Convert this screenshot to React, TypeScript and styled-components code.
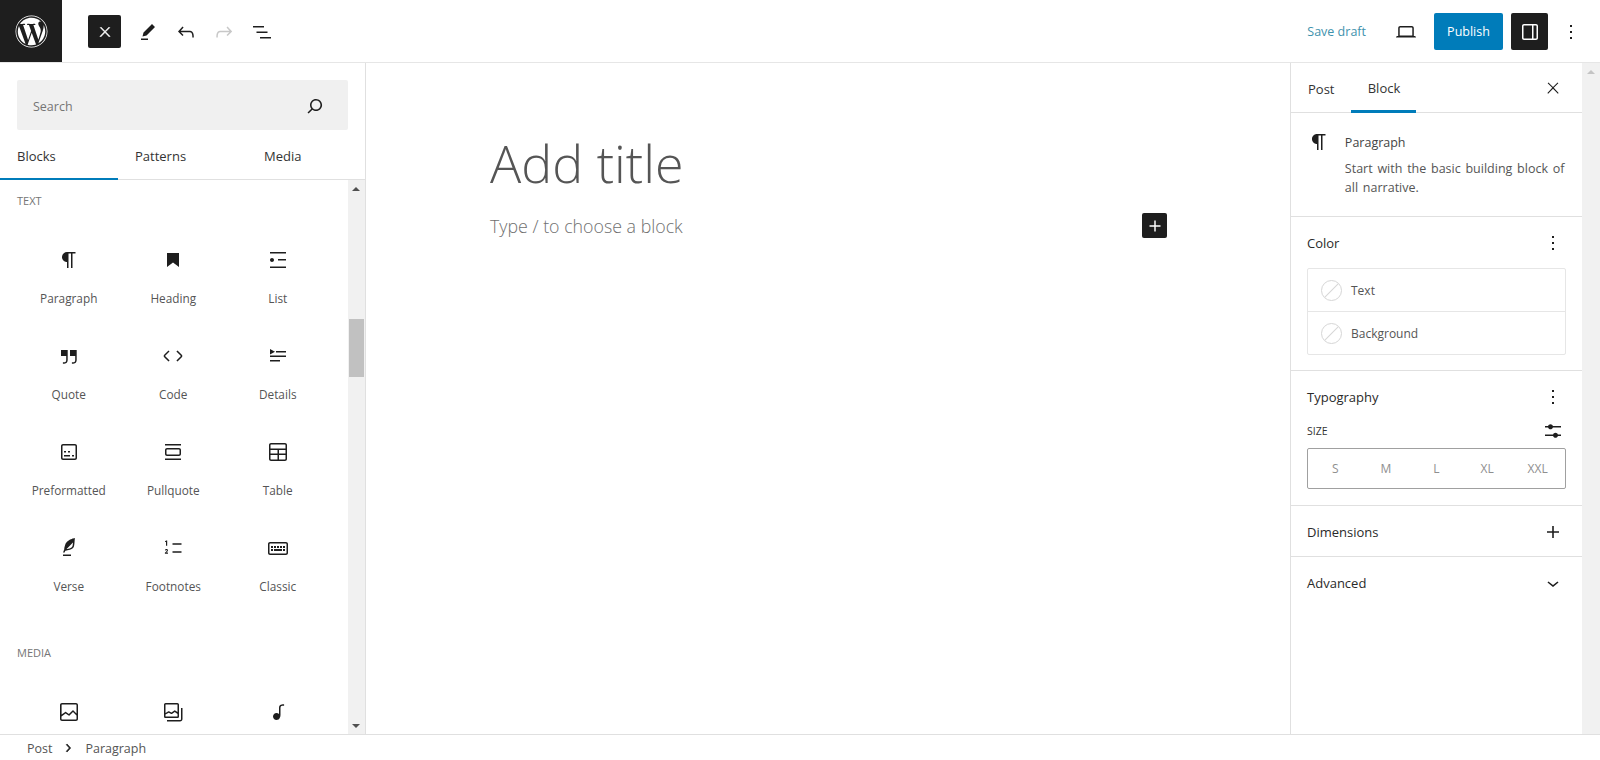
import React from "react";
import styled, { createGlobalStyle } from "styled-components";
import { FaWordpress } from "react-icons/fa";

// ------ Icon paths ------

const paths: Record<string, string> = {
  close: "M13 11.8l6.1-6.3-1-1-6.1 6.2-6.1-6.2-1 1 6.1 6.3-6.5 6.7 1 1 6.5-6.6 6.5 6.6 1-1z",
  plus: "M18 11.2h-5.2V6h-1.6v5.2H6v1.6h5.2V18h1.6v-5.2H18z",
  pencil: "m19 7-3-3-8.5 8.5-1 4 4-1L19 7Zm-7 11.5H5V20h7v-1.5Z",
  undo: "M18.3 11.7c-.6-.6-1.4-.9-2.3-.9H6.7l2.9-3.3-1.1-1-4.5 5L8.5 16l1-1-2.7-2.7H16c.5 0 .9.2 1.3.5 1 1 1 3.4 1 4.5v.3h1.5v-.2c0-1.5 0-4.3-1.5-5.7z",
  redo: "M15.6 6.5l-1.1 1 2.9 3.3H8c-.9 0-1.7.3-2.3.9-1.4 1.5-1.4 4.2-1.4 5.6v.2h1.5v-.3c0-1.1 0-3.5 1-4.5.3-.3.7-.5 1.3-.5h9.2L14.5 15l1.1 1.1 4.6-4.6-4.6-5z",
  listView: "M3 6h11v1.5H3V6Zm3.5 5.5h11V13h-11v-1.5ZM21 17H10v1.5h11V17Z",
  search: "M13 5c-3.3 0-6 2.7-6 6 0 1.4.5 2.7 1.3 3.7l-3.8 3.8 1.1 1.1 3.8-3.8c1 .8 2.3 1.3 3.7 1.3 3.3 0 6-2.7 6-6S16.3 5 13 5zm0 10.5c-2.5 0-4.5-2-4.5-4.5s2-4.5 4.5-4.5 4.5 2 4.5 4.5-2 4.5-4.5 4.5z",
  paragraph: "m9.99609 14v-.2251l.00391.0001v6.225h1.5v-14.5h2.5v14.5h1.5v-14.5h3v-1.5h-8.50391c-2.76142 0-5 2.23858-5 5 0 2.7614 2.23858 5 5 5z",
  heading: "M6 5h12v14l-6-4.4L6 19z",
  list: "M4 4v1.5h16V4H4zm8 8.5h8V11h-8v1.5zM4 20h16v-1.5H4V20zm4-8c0-1.1-.9-2-2-2s-2 .9-2 2 .9 2 2 2 2-.9 2-2z",
  quote: "M13 6v6h5.2v4c0 .8-.2 1.4-.5 1.7-.6.6-1.6.6-2.5.5h-.3v1.5h.5c1 0 2.3-.1 3.3-1 .6-.6 1-1.6 1-2.8V6H13zm-9 6h5.2v4c0 .8-.2 1.4-.5 1.7-.6.6-1.6.6-2.5.5h-.3v1.5h.5c1 0 2.3-.1 3.3-1 .6-.6 1-1.6 1-2.8V6H4v6z",
  code: "M20.8 10.7l-4.3-4.3-1.1 1.1 4.3 4.3c.1.1.1.3 0 .4l-4.3 4.3 1.1 1.1 4.3-4.3c.7-.8.7-1.9 0-2.6zM4.2 11.8l4.3-4.3-1-1-4.3 4.3c-.7.7-.7 1.8 0 2.5l4.3 4.3 1.1-1.1-4.3-4.3c-.2-.1-.2-.3-.1-.4z",
  details: "M4 16h10v1.5H4V16Zm0-4.5h16V13H4v-1.5ZM10 7h10v1.5H10V7ZM4 5l5 2.75L4 10.5Z",
  preformatted: "M18 4H6c-1.1 0-2 .9-2 2v12c0 1.1.9 2 2 2h12c1.1 0 2-.9 2-2V6c0-1.1-.9-2-2-2zm.5 14c0 .3-.2.5-.5.5H6c-.3 0-.5-.2-.5-.5V6c0-.3.2-.5.5-.5h12c.3 0 .5.2.5.5v12zM7 16.5h6V15H7v1.5zm4-4h2V11h-2v1.5zM9 11H7v1.5h2V11zm6 5.5h2V15h-2v1.5z",
  pullquote: "M18 8H6c-1.1 0-2 .9-2 2v4c0 1.1.9 2 2 2h12c1.1 0 2-.9 2-2v-4c0-1.1-.9-2-2-2zm.5 6c0 .3-.2.5-.5.5H6c-.3 0-.5-.2-.5-.5v-4c0-.3.2-.5.5-.5h12c.3 0 .5.2.5.5v4zM4 4v1.5h16V4H4zm0 16h16v-1.5H4V20z",
  table: "M19 3H5c-1.1 0-2 .9-2 2v14c0 1.1.9 2 2 2h14c1.1 0 2-.9 2-2V5c0-1.1-.9-2-2-2zM5 4.5h14c.3 0 .5.2.5.5v3.5h-15V5c0-.3.2-.5.5-.5zm8 5.5h6.5v3.5H13V10zm-1.5 3.5h-7V10h7v3.5zm-7 5.5v-4h7v4.5H5c-.3 0-.5-.2-.5-.5zm14.5.5h-6V15h6.5v4c0 .3-.2.5-.5.5z",
  verse: "M17.8 2l-.9.3c-.1 0-3.6 1-5.2 2.1C10 5.5 9.3 6.5 8.9 7.1c-.6.9-1.7 4.7-1.7 6.3l-.9 2.3c-.2.4 0 .8.4 1 .1 0 .2.1.3.1.3 0 .6-.2.7-.5l.6-1.5c.3 0 .7-.1 1.2-.2.7-.1 1.4-.3 2.2-.5.8-.2 1.6-.5 2.4-.8.7-.3 1.4-.7 1.9-1.2s.8-1.2 1-1.9c.2-.7.3-1.6.4-2.4.1-.8.1-1.7.2-2.5 0-.8.1-1.5.2-2.1V2zm-1.9 5.6c-.1.8-.2 1.5-.3 2.1-.2.6-.4 1-.6 1.3-.3.3-.8.6-1.4.9-.7.3-1.4.5-2.2.8-.6.2-1.3.3-1.8.4L15 7.5c.3-.3.6-.7 1-1.1 0 .4 0 .8-.1 1.2zM6 20h8v-1.5H6V20z",
  footnotes: "M11.5 7.3h9v1.5h-9zM11.5 15.3h9v1.5h-9zM5 4.5h1.2v5.2H5V6H4V5.2c.5 0 .9-.3 1-.7zM3.9 14.2c.2-.9.9-1.3 1.6-1.3.9 0 1.5.6 1.5 1.4 0 .7-.4 1.2-1.1 1.7l-.7.6H7v1.1H3.9v-1c.3-.4.7-.8 1.3-1.3.5-.4.7-.7.7-1 0-.3-.2-.5-.4-.5-.3 0-.5.2-.6.6z",
  classic: "M20 6H4c-1.1 0-2 .9-2 2v9c0 1.1.9 2 2 2h16c1.1 0 2-.9 2-2V8c0-1.1-.9-2-2-2zm.5 11c0 .3-.2.5-.5.5H4c-.3 0-.5-.2-.5-.5V8c0-.3.2-.5.5-.5h16c.3 0 .5.2.5.5v9zM10 10H8v2h2v-2zm-5 2h2v-2H5v2zm8-2h-2v2h2v-2zm-5 5h8v-2H8v2zm6-3h2v-2h-2v2zm3 0h2v-2h-2v2zm0 3h2v-2h-2v2zM5 15h2v-2H5v2z",
  image: "M19 3H5c-1.1 0-2 .9-2 2v14c0 1.1.9 2 2 2h14c1.1 0 2-.9 2-2V5c0-1.1-.9-2-2-2zM5 4.5h14c.3 0 .5.2.5.5v8.4l-3-2.9c-.3-.3-.8-.3-1 0L11.9 14 9 12c-.3-.2-.6-.2-.8 0l-3.6 2.6V5c-.1-.3.1-.5.4-.5zm14 15H5c-.3 0-.5-.2-.5-.5v-2.4l4.1-3 3 1.9c.3.2.7.2.9-.1L16 12l3.5 3.4V19c0 .3-.2.5-.5.5z",
  gallery: "M16.375 4.5H4.625a.125.125 0 0 0-.125.125v8.254l2.859-1.54a.75.75 0 0 1 .68-.016l2.384 1.142 2.89-2.074a.75.75 0 0 1 .874 0l2.313 1.66V4.625a.125.125 0 0 0-.125-.125Zm.125 9.398-2.75-1.975-2.813 2.02a.75.75 0 0 1-.76.067l-2.444-1.17L4.5 14.583v1.792c0 .069.056.125.125.125h11.75a.125.125 0 0 0 .125-.125v-2.477ZM4.625 3C3.728 3 3 3.728 3 4.625v11.75C3 17.273 3.728 18 4.625 18h11.75c.898 0 1.625-.727 1.625-1.625V4.625C18 3.728 17.273 3 16.375 3H4.625ZM20 8v11c0 .69-.31 1-.999 1H6v1.5h13.001c1.52 0 2.499-.982 2.499-2.5V8H20Z",
  audio: "M17.7 4.3c-1.2 0-2.8 0-3.8 1-.6.6-.9 1.5-.9 2.6V14c-.6-.6-1.5-1-2.5-1C8.6 13 7 14.6 7 16.5S8.6 20 10.5 20c1.5 0 2.8-1 3.3-2.3.5-.8.7-1.8.7-2.7V7.9c0-.7.2-1.2.5-1.6.6-.6 1.8-.6 2.8-.6h.3V4.3h-.4z",
  sidebar: "M18 4H6c-1.1 0-2 .9-2 2v12c0 1.1.9 2 2 2h12c1.1 0 2-.9 2-2V6c0-1.1-.9-2-2-2zm-4 14.5H6c-.3 0-.5-.2-.5-.5V6c0-.3.2-.5.5-.5h8v13zm4.5-.5c0 .3-.2.5-.5.5h-2.5v-13H18c.3 0 .5.2.5.5v12z",
  laptop: "M20.5 16h-.7V8c0-1.1-.9-2-2-2H6.2c-1.1 0-2 .9-2 2v8h-.7c-.8 0-1.5.7-1.5 1.5h20c0-.8-.7-1.5-1.5-1.5zM5.7 8c0-.3.2-.5.5-.5h11.6c.3 0 .5.2.5.5v7.6H5.7V8z",
  more: "M13 19h-2v-2h2v2zm0-6h-2v-2h2v2zm0-6h-2V5h2v2z",
  sliders: "M14.5 13.8c-1.1 0-2.1.7-2.4 1.8H4V17h8.1c.3 1 1.3 1.8 2.4 1.8s2.1-.7 2.4-1.8H20v-1.5h-3.1c-.3-1-1.3-1.7-2.4-1.7zM11.9 7c-.3-1-1.3-1.8-2.4-1.8S7.4 6 7.1 7H4v1.5h3.1c.3 1 1.3 1.8 2.4 1.8s2.1-.7 2.4-1.8H20V7h-8.1z",
  chevronDown: "M17.5 11.6L12 16l-5.5-4.4.9-1.2L12 14l4.5-3.6 1 1.2z",
  chevronRight: "M10.6 6L9.4 7l4.6 5-4.6 5 1.2 1 5.4-6z",
};

// ------ Global Style ------

const GlobalStyle = createGlobalStyle`
  html, body {
    margin: 0;
    padding: 0;
    height: 100%;
    overflow: hidden;
    background: #fff;
    font-family: "Open Sans", "Noto Sans", sans-serif;
    color: #1e1e1e;
  }
  * {
    box-sizing: border-box;
  }
`;

// ------ Shell ------

const Shell = styled.div`
  display: flex;
  flex-direction: column;
  width: 1600px;
  height: 760px;
`;

const Workspace = styled.div`
  display: flex;
  flex: 1;
  min-height: 0;
`;

// ------ Top bar ------

const TopBar = styled.header`
  display: flex;
  align-items: center;
  flex: none;
  height: 63px;
  padding-top: 1px;
  border-bottom: 1px solid #e6e6e6;
`;

const Logo = styled.div`
  display: flex;
  align-items: center;
  justify-content: center;
  align-self: flex-start;
  width: 62px;
  height: 62px;
  margin-top: -1px;
  color: #fff;
  background: #1e1e1e;
`;

const ToolGroup = styled.div`
  display: flex;
  align-items: center;
  gap: 14px;
  margin-left: 15px;
`;

const DarkButton = styled.div<{ $w: number; $h: number; $ml: number }>`
  display: flex;
  align-items: center;
  justify-content: center;
  width: ${(p) => p.$w}px;
  height: ${(p) => p.$h}px;
  margin-left: ${(p) => p.$ml}px;
  color: #fff;
  background: #1e1e1e;
  border-radius: 2px;
`;

const Actions = styled.div`
  display: flex;
  align-items: center;
  margin-left: auto;
  padding-right: 17px;
`;

const SaveDraft = styled.span`
  margin-right: 28px;
  font-size: 12.5px;
  color: #3f92ad;
`;

const PublishButton = styled.div`
  display: flex;
  align-items: center;
  justify-content: center;
  width: 69px;
  height: 37px;
  margin-left: 16px;
  font-size: 12.5px;
  color: #fff;
  background: #007cba;
  border-radius: 2px;
`;

const IconBox = styled.svg<{ $size?: number; $color?: string; $bold?: number }>`
  display: block;
  flex: none;
  width: ${(p) => p.$size ?? 24}px;
  height: ${(p) => p.$size ?? 24}px;
  fill: ${(p) => p.$color ?? "#1e1e1e"};
  fill-rule: evenodd;
  ${(p) => p.$bold && `stroke: ${p.$color ?? "#1e1e1e"}; stroke-width: ${p.$bold}px;`}
`;

const Icon = ({ name, size, color, bold }: { name: string; size?: number; color?: string; bold?: number }) => (
  <IconBox viewBox="0 0 24 24" $size={size} $color={color} $bold={bold}>
    <path d={paths[name]} />
  </IconBox>
);

const MoreButton = styled.div`
  margin-left: 11px;
`;

// ------ Inserter ------

const Inserter = styled.aside`
  display: flex;
  flex: none;
  flex-direction: column;
  width: 366px;
  border-right: 1px solid #e0e0e0;
`;

const SearchArea = styled.div`
  flex: none;
  padding: 17px 17px 0;
`;

const SearchBox = styled.div`
  display: flex;
  align-items: center;
  justify-content: space-between;
  width: 331px;
  height: 50px;
  padding: 2px 21px 0 16px;
  font-size: 12.5px;
  color: #757575;
  background: #f0f0f0;
  border-radius: 2px;
`;

const Tabs = styled.div`
  display: grid;
  flex: none;
  grid-template-columns: 118px 129px 1fr;
  height: 50px;
  border-bottom: 1px solid #e0e0e0;
`;

const Tab = styled.div<{ $active?: boolean }>`
  display: flex;
  align-items: center;
  height: 50px;
  padding: 3px 0 0 17px;
  font-size: 13px;
  color: #333;
  border-bottom: 2px solid ${(p) => (p.$active ? "#007cba" : "transparent")};
`;

const InserterBody = styled.div`
  display: flex;
  flex: 1;
  min-height: 0;
`;

const BlockList = styled.div`
  flex: 1;
  min-width: 0;
  overflow: hidden;
`;

const SectionTitle = styled.div<{ $top: number }>`
  margin-top: ${(p) => p.$top}px;
  padding-left: 17px;
  font-size: 11px;
  line-height: 16px;
  color: #757575;
`;

const BlockGrid = styled.div`
  display: grid;
  grid-template-columns: repeat(3, 104.5px);
  grid-auto-rows: 96px;
  margin: 39px 0 0 16.5px;
`;

const BlockItem = styled.div`
  display: flex;
  flex-direction: column;
  align-items: center;
  gap: 18px;
  font-size: 11.8px;
  line-height: 16px;
  color: #555;
`;

const Scrollbar = styled.div<{ $width: number }>`
  position: relative;
  flex: none;
  width: ${(p) => p.$width}px;
  background: #f1f1f1;
`;

const Arrow = styled.div<{ $down?: boolean; $light?: boolean }>`
  position: absolute;
  left: ${(p) => (p.$light ? 5 : 4)}px;
  ${(p) => (p.$down ? "bottom: 6px;" : "top: 7px;")}
  width: 0;
  height: 0;
  border-left: 4px solid transparent;
  border-right: 4px solid transparent;
  ${(p) => (p.$down ? "border-top" : "border-bottom")}: 4px solid ${(p) => (p.$light ? "#c4c4c4" : "#505050")};
`;

const Thumb = styled.div`
  position: absolute;
  top: 139px;
  left: 1px;
  width: 15px;
  height: 58px;
  background: #c1c1c1;
`;

// ------ Editor canvas ------

const Canvas = styled.main`
  flex: 1;
  min-width: 0;
  padding: 66px 0 0 1px;
`;

const Column = styled.div`
  width: 677px;
  margin: 0 auto;
`;

const Title = styled.h1`
  margin: 0;
  font-size: 52px;
  font-weight: 300;
  line-height: 68px;
  color: #555;
`;

const ParagraphRow = styled.div`
  display: flex;
  align-items: center;
  justify-content: space-between;
  margin-top: 16px;
`;

const Placeholder = styled.span`
  font-size: 17.8px;
  font-weight: 300;
  color: #6f6f6f;
`;

const PlusButton = styled.div`
  display: flex;
  align-items: center;
  justify-content: center;
  width: 25px;
  height: 25px;
  background: #1e1e1e;
  border-radius: 2px;
`;

// ------ Settings sidebar ------

const Settings = styled.aside`
  display: flex;
  flex: none;
  flex-direction: column;
  width: 292px;
  border-left: 1px solid #e0e0e0;
`;

const SettingsTabs = styled.div`
  display: flex;
  align-items: center;
  flex: none;
  height: 50px;
  padding-left: 17px;
  border-bottom: 1px solid #e0e0e0;
`;

const SettingsTab = styled.div<{ $active?: boolean; $ml?: number }>`
  display: flex;
  align-items: center;
  justify-content: center;
  height: 50px;
  margin-left: ${(p) => p.$ml ?? 0}px;
  padding-top: 3px;
  font-size: 13px;
  color: #333;
  ${(p) => p.$active && "width: 65px; border-bottom: 3px solid #007cba;"}
`;

const TabClose = styled.div`
  margin-left: auto;
  margin-right: 20px;
`;

const BlockCard = styled.div`
  display: flex;
  flex: none;
  height: 104px;
  padding: 17px 16px 0 16px;
  border-bottom: 1px solid #e0e0e0;
`;

const CardIcon = styled.div`
  width: 38px;
`;

const CardText = styled.div`
  width: 222px;
  padding-top: 5px;
`;

const CardTitle = styled.div`
  font-size: 12.5px;
  font-weight: 500;
  line-height: 16px;
  color: #444;
`;

const CardDescription = styled.div`
  margin-top: 8px;
  font-size: 12.5px;
  line-height: 19px;
  word-spacing: 1.5px;
  color: #555;
`;

const Panel = styled.section<{ $height: number; $flat?: boolean }>`
  flex: none;
  height: ${(p) => p.$height}px;
  padding: 0 16px;
  ${(p) => !p.$flat && "border-bottom: 1px solid #e0e0e0;"}
`;

const PanelHeader = styled.div<{ $height: number }>`
  display: flex;
  align-items: center;
  justify-content: space-between;
  height: ${(p) => p.$height}px;
  padding-right: 1px;
  font-size: 13px;
  font-weight: 500;
  color: #2a2a2a;
`;

const ColorBox = styled.div`
  width: 259px;
  height: 87px;
  margin-top: -1px;
  border: 1px solid #e6e6e6;
  border-radius: 2px;
`;

const ColorRow = styled.div`
  display: flex;
  align-items: center;
  gap: 9px;
  height: 42px;
  padding-left: 13px;
  font-size: 12px;
  color: #555;
  & + & {
    height: 43px;
    border-top: 1px solid #e6e6e6;
  }
`;

const Swatch = styled.span`
  position: relative;
  overflow: hidden;
  width: 21px;
  height: 21px;
  border: 1px solid #d6d6d6;
  border-radius: 50%;
  &::after {
    content: "";
    position: absolute;
    top: 9px;
    left: -3px;
    width: 25px;
    height: 1px;
    background: #d6d6d6;
    transform: rotate(-45deg);
  }
`;

const SizeLabelRow = styled.div`
  display: flex;
  align-items: center;
  justify-content: space-between;
  height: 24px;
  margin-top: -4px;
  padding-right: 1px;
  font-size: 10.5px;
  color: #333;
`;

const SizeControl = styled.div`
  display: grid;
  grid-template-columns: repeat(5, 1fr);
  align-items: center;
  width: 259px;
  height: 41px;
  margin-top: 5px;
  padding: 0 2px;
  font-size: 12px;
  text-align: center;
  color: #8f8f8f;
  border: 1px solid #a0a0a0;
  border-radius: 2px;
`;

// ------ Footer ------

const Footer = styled.footer`
  display: flex;
  align-items: center;
  flex: none;
  height: 26px;
  padding: 1px 0 0 27px;
  font-size: 12.5px;
  color: #555;
  border-top: 1px solid #e0e0e0;
`;

const Crumb = styled.div`
  margin: 0 9px 0 8px;
`;

// ------ Data ------

const textBlocks = [
  ["paragraph", "Paragraph"],
  ["heading", "Heading"],
  ["list", "List"],
  ["quote", "Quote"],
  ["code", "Code"],
  ["details", "Details"],
  ["preformatted", "Preformatted"],
  ["pullquote", "Pullquote"],
  ["table", "Table"],
  ["verse", "Verse"],
  ["footnotes", "Footnotes"],
  ["classic", "Classic"],
];

const mediaBlocks = ["image", "gallery", "audio"];

// ------ App ------

export default function App() {
  return (
    <Shell>
      <GlobalStyle />
      <TopBar>
        <Logo>
          <FaWordpress size={33} />
        </Logo>
        <DarkButton $w={33} $h={33} $ml={26}>
          <Icon name="close" size={16} color="#fff" bold={0.8} />
        </DarkButton>
        <ToolGroup>
          <Icon name="pencil" />
          <Icon name="undo" />
          <Icon name="redo" color="#c8c8c8" />
          <Icon name="listView" />
        </ToolGroup>
        <Actions>
          <SaveDraft>Save draft</SaveDraft>
          <Icon name="laptop" />
          <PublishButton>Publish</PublishButton>
          <DarkButton $w={37} $h={37} $ml={8}>
            <Icon name="sidebar" color="#fff" />
          </DarkButton>
          <MoreButton>
            <Icon name="more" />
          </MoreButton>
        </Actions>
      </TopBar>

      <Workspace>
        <Inserter>
          <SearchArea>
            <SearchBox>
              Search
              <Icon name="search" />
            </SearchBox>
          </SearchArea>
          <Tabs>
            <Tab $active>Blocks</Tab>
            <Tab>Patterns</Tab>
            <Tab>Media</Tab>
          </Tabs>
          <InserterBody>
            <BlockList>
              <SectionTitle $top={13}>TEXT</SectionTitle>
              <BlockGrid>
                {textBlocks.map(([icon, label]) => (
                  <BlockItem key={label}>
                    <Icon name={icon} />
                    {label}
                  </BlockItem>
                ))}
              </BlockGrid>
              <SectionTitle $top={13}>MEDIA</SectionTitle>
              <BlockGrid>
                {mediaBlocks.map((icon) => (
                  <BlockItem key={icon}>
                    <Icon name={icon} />
                  </BlockItem>
                ))}
              </BlockGrid>
            </BlockList>
            <Scrollbar $width={17}>
              <Arrow />
              <Thumb />
              <Arrow $down />
            </Scrollbar>
          </InserterBody>
        </Inserter>

        <Canvas>
          <Column>
            <Title>Add title</Title>
            <ParagraphRow>
              <Placeholder>Type / to choose a block</Placeholder>
              <PlusButton>
                <Icon name="plus" size={22} color="#fff" />
              </PlusButton>
            </ParagraphRow>
          </Column>
        </Canvas>

        <Settings>
          <SettingsTabs>
            <SettingsTab>Post</SettingsTab>
            <SettingsTab $active $ml={17}>Block</SettingsTab>
            <TabClose>
              <Icon name="close" size={18} />
            </TabClose>
          </SettingsTabs>
          <BlockCard>
            <CardIcon>
              <Icon name="paragraph" />
            </CardIcon>
            <CardText>
              <CardTitle>Paragraph</CardTitle>
              <CardDescription>Start with the basic building block of all narrative.</CardDescription>
            </CardText>
          </BlockCard>
          <Panel $height={154}>
            <PanelHeader $height={52}>
              Color
              <Icon name="more" />
            </PanelHeader>
            <ColorBox>
              <ColorRow>
                <Swatch />
                Text
              </ColorRow>
              <ColorRow>
                <Swatch />
                Background
              </ColorRow>
            </ColorBox>
          </Panel>
          <Panel $height={135}>
            <PanelHeader $height={52}>
              Typography
              <Icon name="more" />
            </PanelHeader>
            <SizeLabelRow>
              SIZE
              <Icon name="sliders" />
            </SizeLabelRow>
            <SizeControl>
              <span>S</span>
              <span>M</span>
              <span>L</span>
              <span>XL</span>
              <span>XXL</span>
            </SizeControl>
          </Panel>
          <Panel $height={51}>
            <PanelHeader $height={52}>
              Dimensions
              <Icon name="plus" />
            </PanelHeader>
          </Panel>
          <Panel $height={54} $flat>
            <PanelHeader $height={52}>
              Advanced
              <Icon name="chevronDown" />
            </PanelHeader>
          </Panel>
        </Settings>

        <Scrollbar $width={18}>
          <Arrow $light />
        </Scrollbar>
      </Workspace>

      <Footer>
        Post
        <Crumb>
          <Icon name="chevronRight" size={16} bold={1} />
        </Crumb>
        Paragraph
      </Footer>
    </Shell>
  );
}
